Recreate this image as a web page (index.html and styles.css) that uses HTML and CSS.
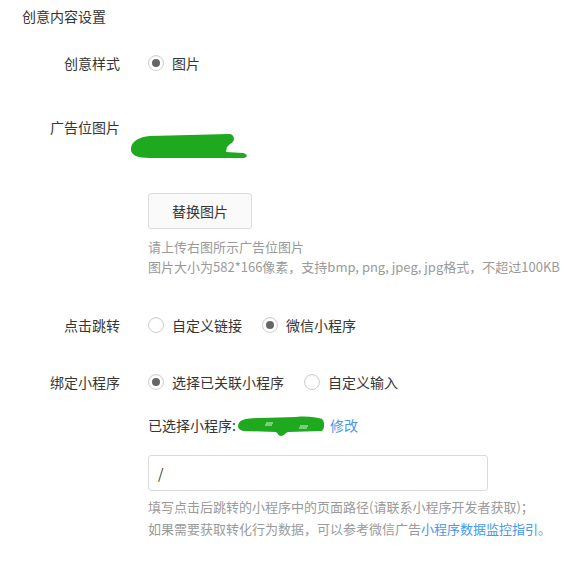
FILE: index.html
```html
<!DOCTYPE html>
<html lang="zh-CN">
<head>
<meta charset="utf-8">
<title>创意内容设置</title>
<link rel="stylesheet" href="styles.css">
</head>
<body>
<div class="page">
  <h2 class="title">创意内容设置</h2>
  <div class="form">
    <div class="row r1">
      <div class="label">创意样式</div>
      <div class="ctrl">
        <div class="options">
          <label class="radio checked"><span class="circle"></span>图片</label>
        </div>
      </div>
    </div>

    <div class="row r2">
      <div class="label">广告位图片</div>
      <div class="ctrl">
        <div class="preview">
          <svg class="mask1" width="120" height="28" viewBox="0 0 120 28" aria-hidden="true">
            <path d="M1,15 C2,8 9,4 20,3 L99,1 C105,1 106,9 100,11 L97,14 L96,19 L113,20 C118,21 118,25 113,25 L20,25 C7,25 0,22 1,15 Z" fill="#1fa91f"/>
          </svg>
        </div>
        <button class="btn" type="button">替换图片</button>
        <p class="tip">请上传右图所示广告位图片<br>图片大小为582*166像素，支持bmp, png, jpeg, jpg格式，不超过100KB</p>
      </div>
    </div>

    <div class="row r3">
      <div class="label">点击跳转</div>
      <div class="ctrl">
        <div class="options">
          <label class="radio"><span class="circle"></span>自定义链接</label>
          <label class="radio checked"><span class="circle"></span>微信小程序</label>
        </div>
      </div>
    </div>

    <div class="row r4">
      <div class="label">绑定小程序</div>
      <div class="ctrl">
        <div class="options">
          <label class="radio checked"><span class="circle"></span>选择已关联小程序</label>
          <label class="radio"><span class="circle"></span>自定义输入</label>
        </div>
        <div class="selected">已选择小程序:<svg class="mask2" width="88" height="22" viewBox="0 0 88 22" aria-hidden="true">
            <path d="M3,9 C5,5 14,4 25,4 L60,3 C70,2 80,3 86,5 C89,8 89,14 86,17 L52,18 C49,19 48,22 45,22 C42,22 42,19 40,18 L8,17 C2,16 1,12 3,9 Z" fill="#1fa91f"/>
            <path d="M30,9 L37,9 M29,11 L36,11 M64,12 L72,12 M63,14 L71,14" stroke="#d8efd8" stroke-width="1"/>
          </svg><a class="link" href="#">修改</a></div>
        <input class="input" type="text" value="/">
        <p class="tip tip2">填写点击后跳转的小程序中的页面路径(请联系小程序开发者获取)；<br>如果需要获取转化行为数据，可以参考微信广告<a class="link" href="#">小程序数据监控指引</a>。</p>
      </div>
    </div>
  </div>
</div>
</body>
</html>
```

FILE: styles.css
```css
* { box-sizing: border-box; }

html, body {
  margin: 0;
  padding: 0;
  background: #ffffff;
}

body {
  font-family: "Noto Sans CJK SC", "Microsoft YaHei", "Noto Sans", sans-serif;
  font-size: 14px;
  color: #353535;
}

.page {
  padding: 6px 0 0 22px;
}

.title {
  margin: 0;
  font-size: 14px;
  font-weight: normal;
  line-height: 20px;
  color: #353535;
}

.form {
  margin-top: 27px;
  margin-left: -22px;
}

.row {
  display: grid;
  grid-template-columns: 120px 1fr;
  column-gap: 28px;
}

.r2 { margin-top: 44px; }
.r3 { margin-top: 38px; }
.r4 { margin-top: 37px; }

.label {
  text-align: right;
  line-height: 20px;
  color: #353535;
}

.ctrl {
  display: flex;
  flex-direction: column;
  align-items: flex-start;
}

.options {
  display: flex;
  align-items: center;
  gap: 20px;
  height: 20px;
}

.radio {
  display: inline-flex;
  align-items: center;
  gap: 8px;
  line-height: 20px;
  color: #353535;
  cursor: pointer;
}

.circle {
  width: 16px;
  height: 16px;
  border-radius: 50%;
  border: 1px solid #cfcfcf;
  background: #fff;
  box-shadow: inset 0 1px 1px rgba(0,0,0,0.06);
  display: inline-flex;
  align-items: center;
  justify-content: center;
}

.radio.checked .circle::after {
  content: "";
  width: 8px;
  height: 8px;
  border-radius: 50%;
  background: #666666;
}

.preview {
  height: 76px;
  padding-top: 16px;
}

.mask1 {
  display: block;
  margin-left: -18px;
}

.btn {
  width: 104px;
  height: 36px;
  border: 1px solid #dcdcdc;
  border-radius: 3px;
  background: #fafafa;
  font-family: inherit;
  font-size: 14px;
  color: #353535;
  padding: 0;
}

.tip {
  margin: 8px 0 0;
  font-size: 13px;
  line-height: 20px;
  color: #9a9a9a;
}

.tip2 {
  margin-top: 5px;
  line-height: 22px;
}

.selected {
  margin-top: 22px;
  line-height: 20px;
  display: flex;
  align-items: center;
  color: #353535;
}

.mask2 {
  display: block;
  margin-left: 0;
  margin-right: 6px;
}

.link {
  color: #459ae9;
  text-decoration: none;
}

.input {
  margin-top: 19px;
  width: 340px;
  height: 36px;
  border: 1px solid #d9dadc;
  border-radius: 3px;
  padding: 0 9px;
  font-family: inherit;
  font-size: 14px;
  color: #353535;
  background: #fff;
  outline: none;
}
```
